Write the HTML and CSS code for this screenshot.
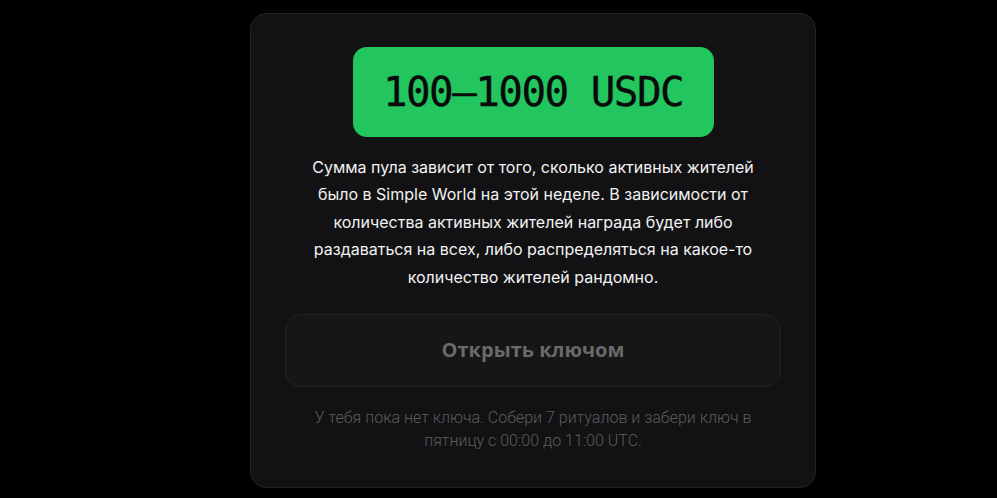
FILE: index.html
```html
<!DOCTYPE html>
<html lang="ru">
<head>
<meta charset="utf-8">
<link rel="stylesheet" href="styles.css">
</head>
<body>
<div class="card">
  <div class="badge">100–1000 USDC</div>
  <p class="desc">Сумма пула зависит от того, сколько активных жителей было в Simple World на этой неделе. В зависимости от количества активных жителей награда будет либо раздаваться на всех, либо распределяться на какое-то количество жителей рандомно.</p>
  <button class="open-btn">Открыть ключом</button>
  <p class="note">У тебя пока нет ключа. Собери 7 ритуалов и забери ключ в пятницу с 00:00 до 11:00 UTC.</p>
</div>
</body>
</html>
```

FILE: styles.css
```css
html, body {
  margin: 0;
  padding: 0;
  background: #000;
}
body {
  padding: 13px 0 0 250px;
  height: 498px;
  box-sizing: border-box;
  overflow: hidden;
}
.card {
  width: 566px;
  box-sizing: border-box;
  background: #121214;
  border: 1px solid #232325;
  border-radius: 16px;
  padding: 33px 35px 35px;
  display: flex;
  flex-direction: column;
  align-items: center;
}
.badge {
  width: 361px;
  height: 90px;
  box-sizing: border-box;
  background: #22c55e;
  border-radius: 14px;
  display: flex;
  align-items: center;
  justify-content: center;
  font-family: "DejaVu Sans Mono", monospace;
  font-size: 41px;
  letter-spacing: -1.6px;
  color: #0a0a0a;
  -webkit-text-stroke: 0.3px #0a0a0a;
}
.desc {
  margin: 17px 0 0;
  width: 460px;
  text-align: center;
  font-family: Inter, "Noto Sans", sans-serif;
  font-size: 16px;
  line-height: 27.4px;
  color: #f2f2f2;
}
.open-btn {
  margin-top: 23px;
  width: 496px;
  height: 73px;
  padding: 0 0 2px;
  background: #161616;
  border: 1px solid #232323;
  border-radius: 16px;
  font-family: "Open Sans", sans-serif;
  font-weight: 700;
  font-size: 20px;
  color: #6a6a6a;
  cursor: default;
}
.note {
  margin: 19px 0 0;
  width: 460px;
  text-align: center;
  font-family: Roboto, sans-serif;
  font-weight: 300;
  font-size: 16px;
  line-height: 23px;
  color: #5c5c5c;
}
```
